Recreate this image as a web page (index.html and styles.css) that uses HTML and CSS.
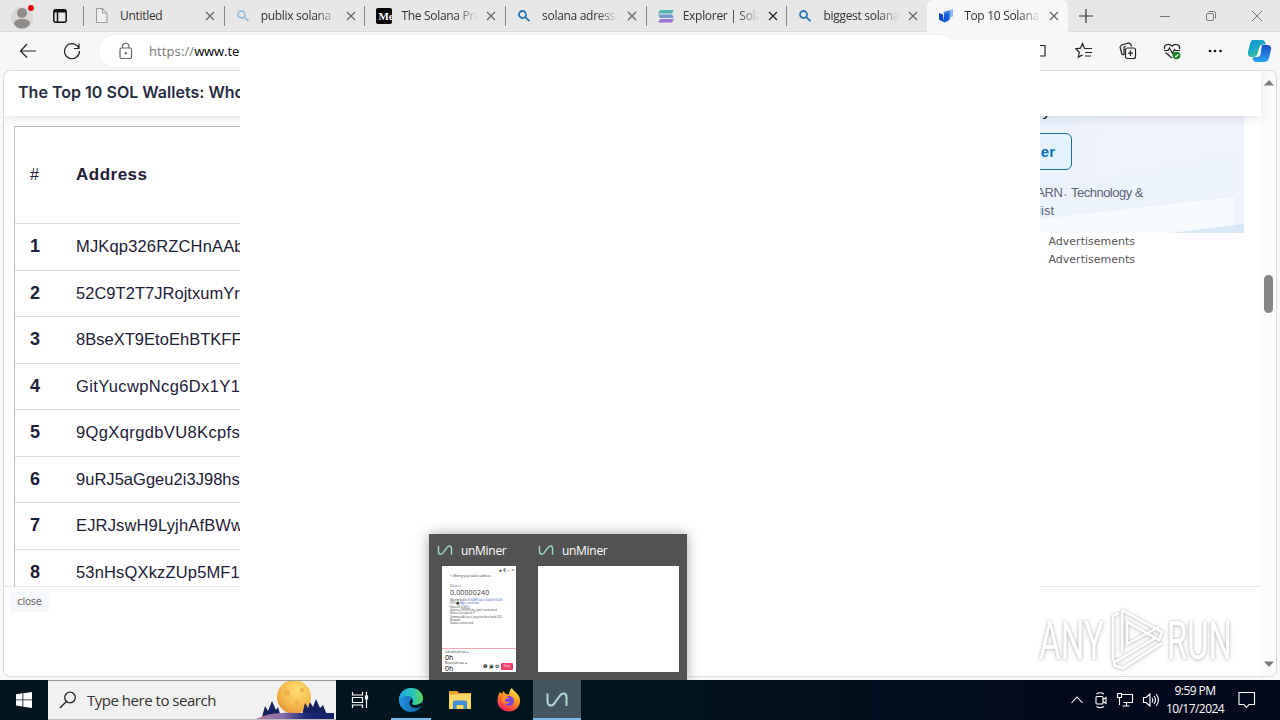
FILE: index.html
```html
<!DOCTYPE html>
<html lang="en">
<head>
<meta charset="utf-8">
<title>Desktop</title>
<link rel="stylesheet" href="styles.css">
</head>
<body>
<div class="desktop">
  <div class="browser">
    <div class="tabstrip">
      <div class="profile">
        <svg width="26" height="28" viewBox="0 0 26 28"><circle cx="13" cy="16" r="11" fill="#d9d8d6"/><circle cx="13" cy="11" r="5" fill="#8f8b88"/><path d="M5 22q0-5 8-5t8 5q-3 4.500-8 4.500T5 22z" fill="#8f8b88"/><circle cx="22" cy="6" r="3" fill="#e30613"/></svg>
        <svg width="14" height="14" viewBox="0 0 14 14" fill="none" stroke="#111" stroke-width="1.500"><rect x=".8" y=".8" width="12.400" height="12.400" rx="2"/><path d="M1 2.200h12" stroke-width="2.600"/><path d="M4.500 3v10"/></svg>
      </div>
      <div class="tab">
        <svg class="fav" viewBox="0 0 16 16" fill="#efefef" stroke="#999"><path d="M1.500.5h6l4.500 4.500v9.500H1.500zM7.500.5V5H12"/></svg>
        <span class="label">Untitled</span><svg class="close" viewBox="0 0 10 10"><path d="M1 1l8 8M9 1L1 9"/></svg>
      </div>
      <div class="tab">
        <svg class="fav pale" viewBox="0 0 16 16"><circle cx="5.500" cy="6.500" r="3.500"/><path d="M8.200 9.200l4.300 4"/></svg>
        <span class="label fade">publix solana</span><svg class="close" viewBox="0 0 10 10"><path d="M1 1l8 8M9 1L1 9"/></svg>
      </div>
      <div class="tab">
        <span class="fav medium">Me</span>
        <span class="label fade">The Solana Pro</span><svg class="close" viewBox="0 0 10 10"><path d="M1 1l8 8M9 1L1 9"/></svg>
      </div>
      <div class="tab">
        <svg class="fav search" viewBox="0 0 16 16"><circle cx="5.500" cy="6.500" r="3.500"/><path d="M8.200 9.200l4.300 4"/></svg>
        <span class="label fade">solana adress -</span><svg class="close" viewBox="0 0 10 10"><path d="M1 1l8 8M9 1L1 9"/></svg>
      </div>
      <div class="tab">
        <svg class="fav" viewBox="0 0 16 16"><defs><linearGradient id="sol" x1="0" x2="0" y1="0" y2="16" gradientUnits="userSpaceOnUse"><stop offset="0" stop-color="#3cc9a3"/><stop offset=".5" stop-color="#6d9bcf"/><stop offset="1" stop-color="#b65fd6"/></linearGradient></defs><g fill="url(#sol)"><path d="M0 5.500L2 2h14l-2 3.500z"/><path d="M0 6.500h14l2 3.500H2z"/><path d="M0 14.500L2 11h14l-2 3.500z"/></g></svg>
        <span class="label fade">Explorer | Sola</span><svg class="close dark" viewBox="0 0 10 10"><path d="M1 1l8 8M9 1L1 9"/></svg>
      </div>
      <div class="tab">
        <svg class="fav search" viewBox="0 0 16 16"><circle cx="5.500" cy="6.500" r="3.500"/><path d="M8.200 9.200l4.300 4"/></svg>
        <span class="label fade">biggest solana</span><svg class="close" viewBox="0 0 10 10"><path d="M1 1l8 8M9 1L1 9"/></svg>
      </div>
      <div class="tab active">
        <svg class="fav" viewBox="0 0 16 16"><path d="M9.500 2.500l4.500-1.500v7.500l-5 1.500z" fill="#8db9f5"/><path d="M4.500 4l5-1.500 1.500 1v8L6 13z" fill="#3f83e6"/><path d="M0 5l4 1.500L5 14.500l-5-3z" fill="#0b4dbb"/><path d="M5 6.500l4.500-1.500v8L5 14.500z" fill="#145fd8"/></svg>
        <span class="label fade">Top 10 Solana</span><svg class="close" viewBox="0 0 10 10"><path d="M1 1l8 8M9 1L1 9"/></svg>
      </div>
      <svg class="plus" width="14" height="14" viewBox="0 0 14 14"><path d="M7 0v14M0 7h14"/></svg>
      <div class="winctl">
        <svg width="12" height="12" viewBox="0 0 12 12"><path d="M1 6.500h10"/></svg>
        <svg width="12" height="12" viewBox="0 0 12 12"><rect x="1.500" y="3.500" width="7" height="7" rx="1.500"/><path d="M3.500 1.500h5q2 0 2 2v5"/></svg>
        <svg width="12" height="12" viewBox="0 0 12 12"><path d="M1 1l10 10M11 1L1 11"/></svg>
      </div>
    </div>
    <div class="toolbar">
      <svg class="ic back" width="18" height="18" viewBox="0 0 18 18"><path d="M8 2L1.500 9 8 15.500M1.500 9H17"/></svg>
      <svg class="ic reload" width="18" height="18" viewBox="0 0 18 18"><path d="M16 6.500A7.500 7.500 0 1 0 16.500 9M16 1.500v5h-5"/></svg>
      <div class="address">
        <svg width="14" height="18" viewBox="0 0 14 18"><rect x="1" y="6" width="11.500" height="10.500" rx="1.500"/><path d="M3.500 6V4.500a3 3 0 0 1 6.500 0V6"/><circle cx="6.800" cy="11.300" r=".6"/></svg>
        <span class="url"><span class="scheme">https://</span>www.te</span>
      </div>
      <div class="tools">
        <svg width="18" height="18" viewBox="0 0 18 18"><path d="M6 3.500h8v10.500H6M1 3.500h13v10.500H1z"/></svg>
        <svg width="18" height="18" viewBox="0 0 18 18"><path d="M11 6.500l-1.500-.2L7.500 1.500 5.500 6.200.8 6.800l3.500 3.400-1 5 4.200-2.300M11 6.500h6M10 10.500h7M10 14h6"/></svg>
        <svg width="18" height="18" viewBox="0 0 18 18"><path d="M5 13L3 12.200 1 5l1.500-2L10 1l2 1.500.5 2"/><path d="M5 13V5.500L6.500 4"/><rect x="6.500" y="6" width="10" height="10.500" rx="2"/><path d="M11.500 8.500v5.500M9 11.200h5"/></svg>
        <svg width="18" height="18" viewBox="0 0 18 18"><path d="M1.500 7C.5 3 5 .5 9 4c4-3.500 8.500-1 7.500 3M2.500 10.500L9 16M1 8.500h4L6.500 6l3 5.500 2-4 1 1H17"/><circle cx="13.500" cy="13.500" r="3.800" fill="#13811b" stroke="none"/><path d="M12 13.800l1 1 2.200-2.500" stroke="#fff"/></svg>
        <svg width="18" height="18" viewBox="0 0 18 18"><g fill="#111" stroke="none"><circle cx="3" cy="9" r="1.300"/><circle cx="8" cy="9" r="1.300"/><circle cx="13.500" cy="9" r="1.300"/></g></svg>
        <svg class="copilot" width="25" height="24" viewBox="0 0 25 24"><defs><linearGradient id="cpa" x1="0" y1="0" x2=".7" y2="1"><stop offset="0" stop-color="#1387d8"/><stop offset=".5" stop-color="#18a9c6"/><stop offset="1" stop-color="#46cf87"/></linearGradient><linearGradient id="cpb" x1=".5" y1="0" x2=".4" y2="1"><stop offset="0" stop-color="#1850c8"/><stop offset="1" stop-color="#27a7f2"/></linearGradient></defs><path d="M15 6h6q4 1 3 5l-2 8q-1 4-5 4H9q-3 0-3.500-4l2-1h3.500q2 0 2.600-3z" fill="url(#cpb)" stroke="none"/><path d="M6 1h9q3 0 4 4.500h-3q-3 0-4 4l-1.500 5Q9.700 18 6 18H4q-4-1-3-5l2-8q1-4 3-4z" fill="url(#cpa)" stroke="none"/></svg>
      </div>
    </div>
    <div class="page">
      <div class="view">
        <div class="pagehead">The Top 10 SOL Wallets: Who</div>
        <div class="columns">
          <div class="wallets">
            <div class="row head"><span class="num">#</span><span>Address</span></div>
            <div class="row loose"><span class="num">1</span><span>MJKqp326RZCHnAAb</span></div>
            <div class="row"><span class="num">2</span><span>52C9T2T7JRojtxumYr</span></div>
            <div class="row"><span class="num">3</span><span>8BseXT9EtoEhBTKFF</span></div>
            <div class="row looser"><span class="num">4</span><span>GitYucwpNcg6Dx1Y1</span></div>
            <div class="row looser"><span class="num">5</span><span>9QgXqrgdbVU8Kcpfs</span></div>
            <div class="row"><span class="num">6</span><span>9uRJ5aGgeu2i3J98hs</span></div>
            <div class="row loose"><span class="num">7</span><span>EJRJswH9LyjhAfBWw</span></div>
            <div class="row loose"><span class="num">8</span><span>53nHsQXkzZUp5MF1</span></div>
          </div>
          <div class="aside">
            <div class="ad">
              <svg class="waves" viewBox="0 0 204 117" preserveAspectRatio="none"><path d="M0 75L194 38v79H0z" fill="#ecf3fd"/><path d="M0 103L194 81v36H0z" fill="#f7faff"/><path d="M130 117l74-9v9z" fill="#d7e9f8"/></svg>
              <div class="adtext"><div class="adline">y</div><div class="adbtn">er</div><div class="adcopy"><div>ARN<i>&nbsp;•&nbsp;</i> Technology &amp;</div><div class="second">list</div></div></div>
            </div>
            <div class="adnote">Advertisements</div>
            <div class="adnote">Advertisements</div>
          </div>
        </div>
        <div class="sticky"><span class="closebtn">close</span></div>
      </div>
      <div class="scrollbar">
        <svg width="10" height="6" viewBox="0 0 10 6"><path d="M0 5.500L5 0l5 5.500z"/></svg>
        <div class="thumb"></div>
        <svg width="10" height="6" viewBox="0 0 10 6"><path d="M0 .5L5 6l5-5.500z"/></svg>
      </div>
    </div>
  </div>
  <div class="taskbar">
    <div class="start"><svg width="16" height="16" viewBox="0 0 16 16" fill="#fff"><path d="M0 2.300L6.500 1.300v6.200H0zM7.300 1.200L16 0v7.500H7.300zM0 8.300h6.500v6.200L0 13.600zM7.300 8.300H16V16l-8.700-1.300z"/></svg></div>
    <div class="searchbox">
      <svg width="18" height="18" viewBox="0 0 18 18" fill="none" stroke="#222" stroke-width="1.300"><circle cx="11" cy="6.500" r="5.300"/><path d="M7.300 10.500L1 17"/></svg>
      <span>Type here to search</span>
      <svg class="moon" width="80" height="39" viewBox="0 0 80 39"><defs><radialGradient id="mn" cx=".6" cy=".3" r=".8"><stop offset="0" stop-color="#ffdf75"/><stop offset=".6" stop-color="#f4b94b"/><stop offset="1" stop-color="#e08a3c"/></radialGradient><linearGradient id="hl"><stop offset="0" stop-color="#b77793"/><stop offset=".35" stop-color="#8a6fae"/><stop offset=".65" stop-color="#1d2a78"/><stop offset="1" stop-color="#12206a"/></linearGradient></defs><circle cx="40" cy="16" r="17" fill="url(#mn)"/><g fill="#efb04b"><circle cx="33" cy="12" r="3"/><circle cx="43" cy="22" r="2.500"/><circle cx="48" cy="9" r="2"/></g><path d="M8 36l3-11 3 5 4-10 4 9 2-3 3 10zM48 34l3-12 3 5 2-6 3 5 3-8 4 9 3-3 4 10z" fill="#15205f"/><path d="M0 39q16-9 40-7h40v7z" fill="url(#hl)"/></svg>
    </div>
    <div class="app"><svg width="18" height="18" viewBox="0 0 18 18" fill="none" stroke="#fff" stroke-width="1.200"><path d="M1.500 1v3h10V1M1.500 17v-3h10v3M1.500 6.500h10v5h-10zM15.500 1v16"/><path d="M14.500 5h2v3h-2z" fill="#fff"/></svg></div>
    <div class="app running edge"><svg width="26" height="26" viewBox="0 0 26 26"><defs><linearGradient id="ea" x1="0" x2="1"><stop offset="0" stop-color="#1ba6e4"/><stop offset=".6" stop-color="#2cc5b5"/><stop offset="1" stop-color="#62d850"/></linearGradient><linearGradient id="eb" x1="0" x2="1"><stop offset="0" stop-color="#2194e0"/><stop offset="1" stop-color="#0d579f"/></linearGradient></defs><circle cx="13" cy="13" r="12" fill="url(#eb)"/><path d="M1 13C1 6 6 1 13 1s12 5 12 10c0 4-3 7-8 7-3 0-3.500-1.500-2.500-2.500C16 13 15 9 10 9c-4 0-7 1.500-9 4z" fill="url(#ea)"/><path d="M14.500 15.500c-1 1-.5 2.500 2.500 2.500 3 0 5-1 6.500-2.500l1.500 2C22 21 16 22 13 19.500c-2-1.700-2-5 .5-7.500 1.500 1 1.500 2.500 1 3.500z" fill="#02161e"/></svg></div>
    <div class="app files"><svg width="22" height="20" viewBox="0 0 22 20"><path d="M0 1h8l2 2h12v16H0z" fill="#e8a72c"/><path d="M0 5l9-1h13v15H0z" fill="#fcd667"/><path d="M4 19v-7q0-1.500 1.500-1.500h11Q18 10.500 18 12v7h-3.500v-4h-7v4z" fill="#3a8fd6"/></svg></div>
    <div class="app"><svg width="24" height="24" viewBox="0 0 24 24"><defs><linearGradient id="fx" x1=".8" y1="0" x2=".3" y2="1"><stop offset="0" stop-color="#fff04a"/><stop offset=".45" stop-color="#ff9420"/><stop offset="1" stop-color="#f5195a"/></linearGradient></defs><path d="M3 4l2 2 1-3 3 3 3 .5C12 4 13 1.500 15 0c.5 3 7.500 5 8 12 .4 7-5 11.500-11 11.500S.5 19 .5 13C.5 9 1.500 6 3 4z" fill="url(#fx)"/><circle cx="12" cy="13" r="5" fill="#7a45dc"/><path d="M5 8c3 0 4 1 7 1-1 2-4 1.500-4 3.500 0 1.500 3 2 5 1-1 3-7 3-8-1z" fill="#ff8a25"/></svg></div>
    <div class="app running focus"><svg width="22" height="16" viewBox="0 0 22 16"><path class="un" d="M1.500 1.500V9q0 4.500 3.500 4.500 2.500 0 4-3L13 5q2-3.500 4.500-3.500 3 0 3 4V14"/></svg></div>
    <div class="tray">
      <svg width="14" height="16" viewBox="0 0 14 16"><path d="M1.500 11L7 5l5.500 6"/></svg>
      <svg width="14" height="18" viewBox="0 0 14 18"><rect x="2" y="5.500" width="7" height="7.500" rx="1"/><path d="M9 8.500l3-2v6l-3-2M2.500 3Q6 .5 10 3M2.500 15.500q3.500 2.500 7.500 0"/></svg>
      <svg width="18" height="16" viewBox="0 0 18 16"><path d="M5.500 2.500h11v8h-9M1.500 1.500h4v4h-4zM3.500 5.500v7.500M10.500 10.500V14M6.500 14h7"/></svg>
      <svg width="18" height="16" viewBox="0 0 18 16"><path d="M1.500 5.500h2.500L8 2v12l-4-3.500H1.500zM10 6q1.500 2 0 4.500M12 4q3 4 0 8M14.200 2q4.500 6 0 12"/></svg>
      <div class="clock"><div>9:59 PM</div><div>10/17/2024</div></div>
      <svg class="note" width="18" height="18" viewBox="0 0 18 18"><path d="M1 1.500h15.500v12H11l-2.500 3-2.500-3H1z"/></svg>
    </div>
  </div>

  <div class="window"></div>

  <svg class="watermark" width="206" height="76" viewBox="0 0 206 76">
    <text x="8" y="57" textLength="65" lengthAdjust="spacingAndGlyphs">ANY</text>
    <text x="136" y="57" textLength="65" lengthAdjust="spacingAndGlyphs">RUN</text>
    <g fill="none" stroke="#fff" stroke-width="2.500"><path d="M91 8v42M91 8l40 22-3 8-32-18v22l32-17M82 56V14l6-3M82 56l2 8 8 2 39-25M84 60l42-25"/></g>
  </svg>

  <div class="previews">
    <div class="preview narrow">
      <div class="ptitle"><svg width="16" height="11" viewBox="0 0 22 16"><path class="un mint" d="M1.500 1.500V9q0 4.500 3.500 4.500 2.500 0 4-3L13 5q2-3.500 4.500-3.500 3 0 3 4V14"/></svg><span>unMiner</span></div>
      <div class="thumbnail miner">
        <div class="m-top">· ● € – ×</div>
        <div class="m-title">× &nbsp;Mining your wallet address</div>
        <div class="m-label">Balance</div>
        <div class="m-balance">0.00000240</div>
        <div class="m-log"><div>Mining wallet <em>9cb28f7e4a1e5b2d7c0a94</em></div><div>CPU ⬤ <em>Algo: randomx</em></div><div>Speed 0.0 kH/s</div><div>Latency 299999 ms, pool connected</div><div>Shares accepted: 0</div><div>Unmineable pool, payout threshold 0.01</div><div>Reward</div><div>Status: connected</div></div>
        <div class="m-bottom"><div><div class="m-label">Calculated rate ●</div><div class="m-zero">0h</div><div class="m-label">Reported rate ●</div><div class="m-zero">0h</div></div><div class="m-actions">❶ ▣ ✿<span class="m-stop">Stop</span></div></div>
      </div>
    </div>
    <div class="preview wide">
      <div class="ptitle"><svg width="16" height="11" viewBox="0 0 22 16"><path class="un mint" d="M1.500 1.500V9q0 4.500 3.500 4.500 2.500 0 4-3L13 5q2-3.500 4.500-3.500 3 0 3 4V14"/></svg><span>unMiner</span></div>
      <div class="thumbnail"></div>
    </div>
  </div>
</div>
</body>
</html>
```
FILE: styles.css
```css
* { box-sizing: border-box; }
body { margin: 0; font-family: "Open Sans", "Noto Sans", sans-serif; }
svg { display: block; flex: none; }
.desktop { position: relative; width: 1280px; height: 720px; overflow: hidden; display: flex; flex-direction: column; }
.browser { height: 680px; background: #f7f7f7; display: flex; flex-direction: column; }

.tabstrip { height: 32px; flex: none; display: flex; background: #e7e7e7; border-bottom: 1px solid #dcdcdc; }
.profile { width: 83px; display: flex; align-items: center; gap: 18px; padding-left: 9px; }
.tab { width: 140.700px; height: 32px; display: flex; align-items: center; padding-left: 12px; flex: none; }
.tab::before { content: ""; width: 1px; height: 20px; background: #888; margin-left: -12px; margin-right: 11px; }
.tab.active { background: #f7f7f7; border-radius: 6px 6px 0 0; }
.tab.active::before { background: transparent; }
.fav { width: 16px; height: 16px; margin-right: 9px; overflow: visible; }
.fav.search { fill: none; stroke: #2673b8; stroke-width: 1.800; }
.fav.pale { fill: none; stroke: #9bbfdd; stroke-width: 1.800; }
.medium { background: #000; color: #fff; font: bold 11px/16px "Liberation Serif", serif; overflow: hidden; border-radius: 2px; padding-left: 2px; }
.label { font-size: 12px; line-height: 18px; color: #333; width: 79px; overflow: hidden; white-space: nowrap; letter-spacing: -.3px; }
.label.fade { -webkit-mask-image: linear-gradient(90deg, #000 70%, transparent 97%); mask-image: linear-gradient(90deg, #000 70%, transparent 97%); }
.close { width: 10px; height: 10px; margin-left: 6px; fill: none; stroke: #666; stroke-width: 1.300; }
.close.dark { stroke: #222; }
.plus { margin: 9px 0 0 11px; fill: none; stroke: #333; stroke-width: 1.200; }
.winctl { margin-left: auto; display: flex; gap: 34px; padding: 10px 17px 0 0; fill: none; stroke: #777; stroke-width: 1; }

.toolbar { height: 38px; flex: none; display: flex; align-items: center; padding-left: 19px; fill: none; stroke: #222; stroke-width: 1.200; }
.reload { margin-left: 26px; }
.address { margin-left: 18px; width: 857px; height: 32px; border-radius: 16px; background: #fff; display: flex; align-items: center; padding-left: 20px; gap: 16px; box-shadow: 0 0 3px #ececec; stroke: #666; }
.url { font-size: 13px; color: #000; letter-spacing: -.1px; white-space: nowrap; }
.scheme { color: #777; letter-spacing: .1px; }
.tools { display: flex; align-items: center; gap: 26px; margin-left: 75px; }
.copilot { margin-left: -4px; }

.page { width: 1273px; height: 607px; margin: 0 0 0 4px; display: flex; background: #fdfdfd; border: 1px solid #dcdcdc; border-left-width: 0; border-radius: 8px; overflow: hidden; box-shadow: -1px 0 0 #dcdcdc; }
.view { width: 1258px; display: flex; flex-direction: column; background: #fff; }
.pagehead { position: relative; z-index: 1; height: 45px; flex: none; padding-left: 14px; font: 600 16px/42px Inter, sans-serif; letter-spacing: .02px; color: #272b41; background: #fff; box-shadow: 0 3px 9px rgba(0,0,0,.1); }
.columns { height: 470px; flex: none; display: flex; overflow: hidden; }
.wallets { width: 820px; height: 480px; margin: 10px 0 0 10px; border: 1px solid #b8b8b8; flex: none; }
.row { height: 46.500px; display: flex; align-items: center; border-bottom: 1px solid #dcdcdc; font: 16.500px "Liberation Sans", sans-serif; color: #1d2038; padding-left: 15px; letter-spacing: .03px; }
.row.loose { letter-spacing: .16px; }
.row.looser { letter-spacing: .38px; }
.row .num { width: 46px; font-weight: bold; font-size: 18px; }
.row.head { height: 97px; font-weight: bold; font-size: 17px; letter-spacing: .5px; }
.row.head .num { font-weight: normal; font-size: 16px; }
.aside { width: 300px; margin-left: 110px; }
.ad { height: 117px; background: linear-gradient(100deg, #e9f3ff, #eff3fd 60%); overflow: hidden; display: grid; }
.waves { grid-area: 1 / 1; justify-self: end; width: 204px; height: 117px; }
.adtext { grid-area: 1 / 1; padding-left: 41px; font-family: "Liberation Sans", sans-serif; }
.adline { height: 17px; margin-top: -14px; font-size: 17px; line-height: 17px; color: #222; width: 66px; text-align: right; }
.adbtn { width: 87px; height: 37px; margin: 14px 0 15px; border: 1px solid #1b70a8; border-radius: 6px; background: #e5f3ff; color: #0873c4; font-weight: bold; font-size: 15px; line-height: 35px; text-align: right; padding-right: 16px; }
.adcopy { width: 158px; text-align: right; font-size: 13px; line-height: 16px; letter-spacing: -.5px; color: #5f6478; white-space: nowrap; }
.second { padding-right: 89px; letter-spacing: 0; }
.adcopy i { font-style: normal; font-size: 8px; color: #aaa; }
.adnote { font: 11px/18px "DejaVu Sans", sans-serif; color: #555; text-align: right; padding-right: 109px; }
.sticky { flex: 1; border-top: 1px solid #e7e7e7; background: #fff; z-index: 1; padding: 5px 0 0 6px; }
.closebtn { display: block; width: 39px; height: 20px; background: #f6f8fb; font: 10px/20px "DejaVu Sans", sans-serif; letter-spacing: -.3px; color: #666; text-align: center; }
.scrollbar { width: 15px; display: flex; flex-direction: column; align-items: center; fill: #7b7b7b; background: #fbfbfb; padding: 9px 0 9px; }
.thumb { width: 9px; height: 38px; border-radius: 5px; background: #858585; margin: 189px 0 auto; }

.window { position: absolute; left: 240px; top: 40px; width: 800px; height: 600px; background: #fff; z-index: 2; }

.watermark { position: absolute; left: 1031px; top: 602px; z-index: 3; overflow: visible; filter: drop-shadow(0 0 1px rgba(0,0,0,.22)) drop-shadow(0 1px 2px rgba(0,0,0,.18)); }
.watermark text { font: 400 54px Roboto, sans-serif; fill: #fff; }

.taskbar { height: 40px; display: flex; align-items: stretch; background: linear-gradient(90deg, #02161e, #02151f 50%, #020a1c 85%); }
.start { width: 48px; display: flex; align-items: center; justify-content: center; }
.searchbox { width: 288px; background: #f1f1f1; border-top: 1px solid #999; border-bottom: 1px solid #bbb; display: flex; align-items: center; padding-left: 11px; font-size: 15px; color: #333; overflow: hidden; }
.searchbox span { margin-left: 10px; white-space: nowrap; letter-spacing: -.48px; }
.searchbox .moon { margin: 0 2px 0 auto; overflow: visible; }
.app { width: 48px; display: flex; align-items: center; justify-content: center; }
.running { box-shadow: inset 0 -2px 0 #76b9ed; }
.edge { margin: 0 4px 0 7px; width: 40px; }
.files { margin: 0 1px; }
.focus { width: 48px; background: #435560; }
.un { fill: none; stroke: #b4d9d4; stroke-width: 2; }
.un.mint { stroke: #9edcc8; }
.tray { margin-left: auto; display: flex; align-items: center; gap: 8px; padding-right: 24px; fill: none; stroke: #fff; stroke-width: 1.100; }
.tray svg:first-child { margin-right: 2px; }
.clock { width: 66px; margin: 0 2px 0 -6px; color: #fff; font-size: 12px; line-height: 18px; text-align: center; letter-spacing: -.55px; white-space: nowrap; }

.previews { position: absolute; left: 429px; top: 534px; width: 258px; height: 146px; z-index: 4; background: #525252; display: flex; box-shadow: 0 0 12px rgba(0,0,0,.35); clip-path: inset(-20px -20px 0 -20px); }
.preview { padding-left: 8px; }
.narrow { width: 101px; }
.ptitle { height: 32px; display: flex; align-items: center; gap: 8px; color: #fff; font-size: 12px; letter-spacing: -.3px; }
.thumbnail { width: 141px; height: 106px; background: #fff; }
.miner { width: 74px; margin-left: 5px; overflow: hidden; display: flex; flex-direction: column; font: 3px/4px "Open Sans", sans-serif; color: #333; white-space: nowrap; }
.m-top { font-size: 5px; line-height: 8px; text-align: right; padding-right: 2px; }
.m-title { padding-left: 8px; line-height: 5px; margin-bottom: 5px; }
.m-label { color: #666; padding-left: 8px; }
.m-balance { font-size: 7px; line-height: 9px; padding-left: 8px; margin-bottom: 2px; letter-spacing: .15px; }
.m-log { padding-left: 8px; line-height: 3.350px; font-size: 2.800px; }
.m-log em { font-style: normal; color: #3155c8; }
.m-bottom { margin-top: auto; height: 24px; border-top: 1px solid #f7a9b4; display: flex; justify-content: space-between; padding: 1px 3px 0; }
.m-bottom .m-label { padding: 0; color: #222; line-height: 4px; }
.m-zero { font-size: 7px; line-height: 7px; color: #000; }
.m-actions { display: flex; align-items: center; align-self: flex-end; font-size: 5px; line-height: 7px; gap: 2px; padding-bottom: 2px; }
.m-stop { width: 12px; height: 7px; border-radius: 1px; background: #ef3f66; color: #fff; font-size: 3px; text-align: center; }
```
